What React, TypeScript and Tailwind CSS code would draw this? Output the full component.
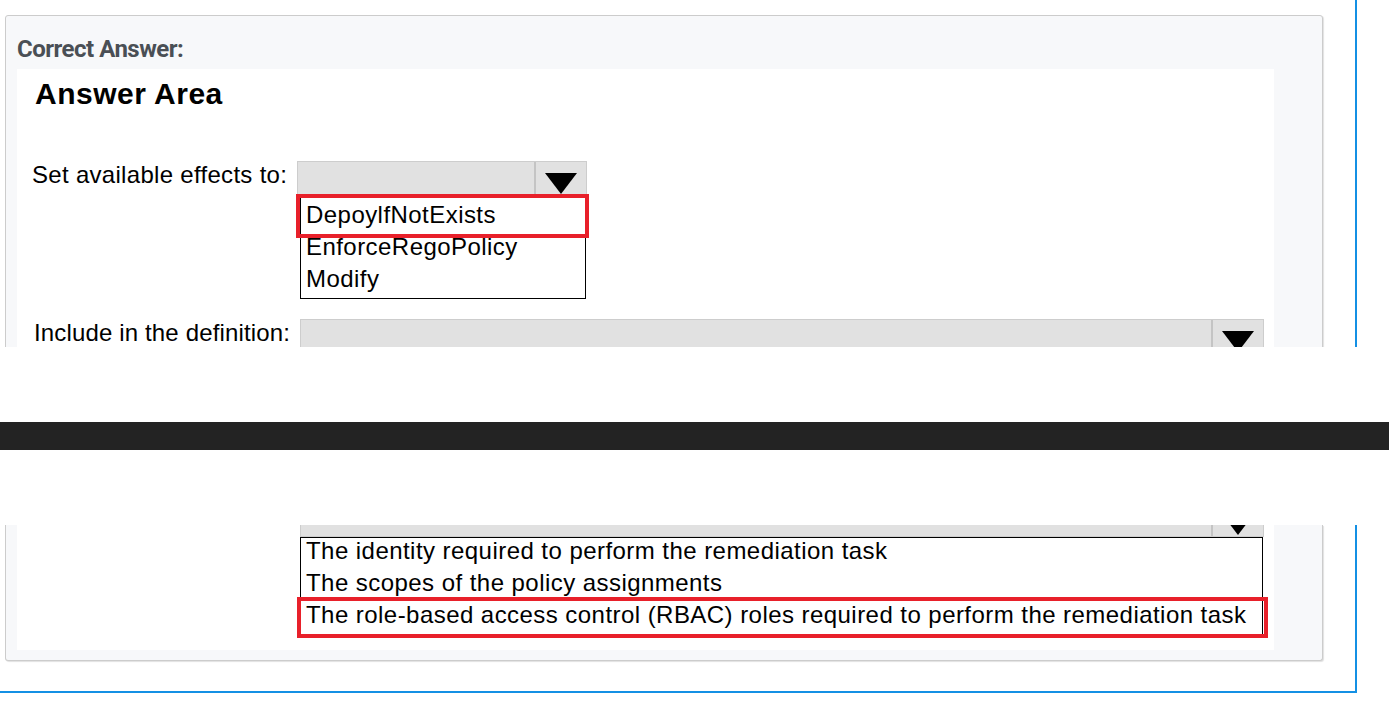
import React from "react"

const sans = "font-['Liberation_Sans',Arial,sans-serif]"

function Tri() {
  return (
    <svg width="32" height="21" viewBox="0 0 32 21">
      <polygon points="0,0 32,0 16,21" fill="#000" />
    </svg>
  )
}

function Select({ w, className = "" }: { w: string; className?: string }) {
  return (
    <div className={`flex h-[35px] shrink-0 border border-[#cdcdcd] bg-[#e1e1e1] ${w} ${className}`}>
      <div className="flex-1" />
      <div className="flex w-[52px] justify-center border-l-2 border-[#c4c4c4] pt-[11px]">
        <Tri />
      </div>
    </div>
  )
}

function Item({ children }: { children: React.ReactNode }) {
  return <div className="h-[32px] whitespace-nowrap text-[24px] leading-[26px] tracking-[0.45px]">{children}</div>
}

export default function App() {
  return (
    <div className={`h-[707px] w-[1389px] overflow-hidden bg-white text-black ${sans}`}>
      {/* upper part of the question */}
      <div className="h-[347px] w-[1357px] overflow-hidden border-r-2 border-[#1490e4] pl-[5px] pt-[15px]">
        <div className="h-[400px] w-[1318px] rounded-t-[3px] border border-[#cccccc] bg-[#f7f8fa] pl-[11px] pt-[19px] shadow-[1px_1px_1px_rgba(0,0,0,0.12)]">
          <div className="h-[28px] font-['Roboto',sans-serif] text-[24px] font-bold leading-[28px] tracking-[-0.5px] text-[#4a4f55]">
            Correct Answer:
          </div>
          <div className="mt-[6px] h-[400px] w-[1257px] bg-white pt-[8px]">
            <h1 className="pl-[18px] text-[30px] font-bold leading-[34px] tracking-[0.5px]">Answer Area</h1>

            <div className="mt-[50px] flex">
              <div className="w-[280px] shrink-0 pl-[15px] text-[24px] leading-[28px] tracking-[0.3px]">Set available effects to:</div>
              <div>
                <Select w="w-[290px]" />
                <div className="relative ml-[3px] w-[286px] border border-black bg-white pl-[5px] pt-[5px]">
                  <Item>DepoylfNotExists</Item>
                  <Item>EnforceRegoPolicy</Item>
                  <Item>Modify</Item>
                  <div className="absolute -left-[5px] -top-[3px] h-[44px] w-[293px] border-4 border-[#e8202a]" />
                </div>
              </div>
            </div>

            <div className="mt-[20px] flex">
              <div className="w-[283px] shrink-0 pl-[17px] text-[24px] leading-[28px] tracking-[0.15px]">Include in the definition:</div>
              <Select w="w-[964px]" />
            </div>
          </div>
        </div>
      </div>

      {/* page break */}
      <div className="h-[75px]" />
      <div className="h-[28px] w-full bg-[#232323]" />
      <div className="h-[75px]" />

      {/* lower part of the question */}
      <div className="h-[168px] w-[1357px] border-b-2 border-r-2 border-[#1490e4] pl-[5px]">
        <div className="h-[136px] w-[1318px] rounded-b-[3px] border-x border-b border-[#cccccc] bg-[#f7f8fa] pl-[11px] shadow-[1px_1px_1px_rgba(0,0,0,0.12)]">
          <div className="h-[125px] w-[1257px] overflow-hidden bg-white">
            <Select w="w-[964px]" className="-mt-[23px] ml-[283px]" />
            <div className="relative ml-[283px] w-[963px] border border-black bg-white pl-[5px]">
              <Item>The identity required to perform the remediation task</Item>
              <Item>The scopes of the policy assignments</Item>
              <Item>The role-based access control (RBAC) roles required to perform the remediation task</Item>
              <div className="absolute -left-[4px] top-[59px] h-[41px] w-[971px] border-4 border-[#e8202a]" />
            </div>
          </div>
        </div>
      </div>
    </div>
  )
}
